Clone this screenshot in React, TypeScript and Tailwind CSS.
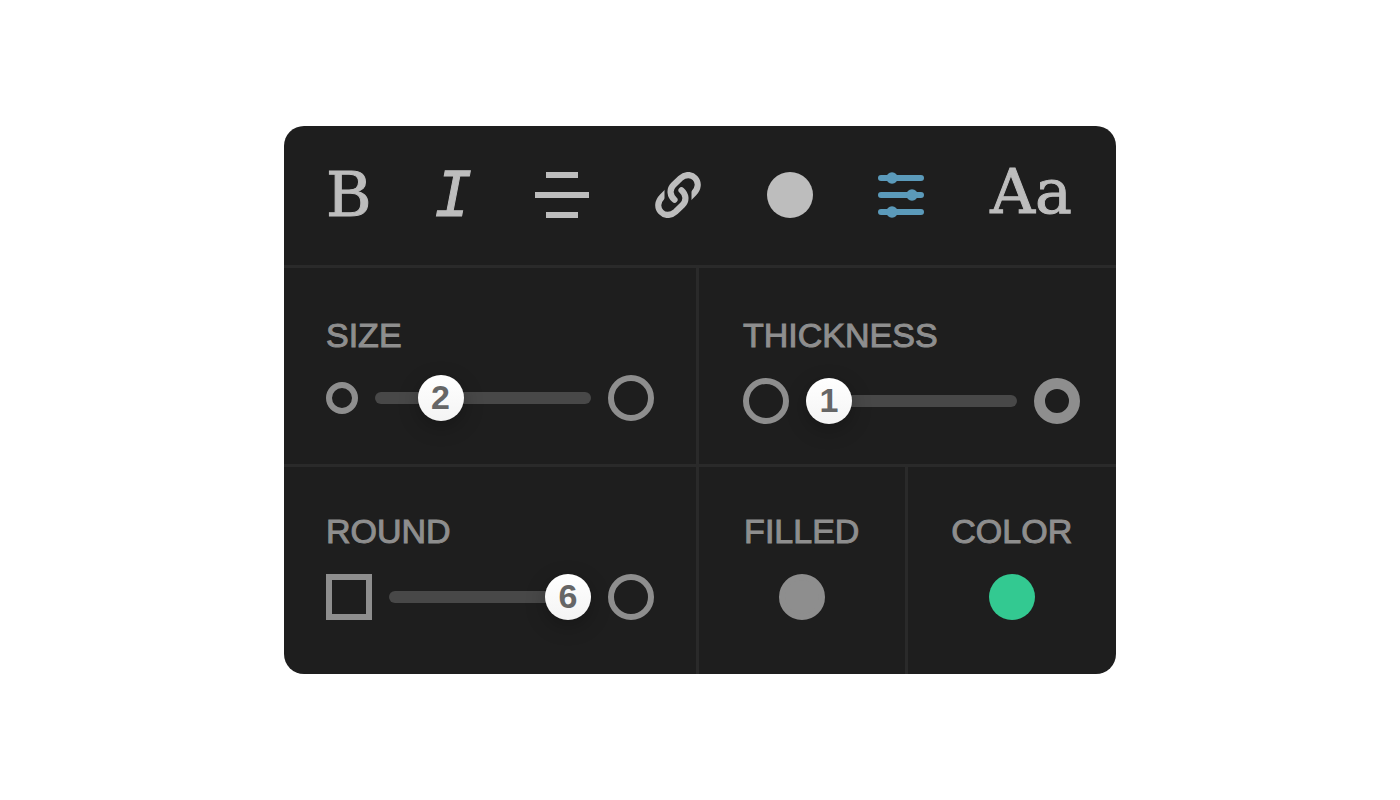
import React, { useState } from "react";

const THUMB = 46;

interface SliderProps {
  id: string;
  min: number;
  max: number;
  initial: number;
}

function Slider({ id, min, max, initial }: SliderProps) {
  const [value, setValue] = useState(initial);
  const ratio = (value - min) / (max - min);

  return (
    <div className="relative h-[46px] min-w-0 flex-1">
      <input
        id={id}
        type="range"
        min={min}
        max={max}
        value={value}
        onChange={(e) => setValue(Number(e.target.value))}
        className="block h-[46px] w-full cursor-pointer appearance-none bg-transparent focus:outline-none [&::-webkit-slider-runnable-track]:h-3 [&::-webkit-slider-runnable-track]:rounded-full [&::-webkit-slider-runnable-track]:bg-[#484848] [&::-webkit-slider-thumb]:-mt-[17px] [&::-webkit-slider-thumb]:size-[46px] [&::-webkit-slider-thumb]:appearance-none [&::-webkit-slider-thumb]:rounded-full [&::-webkit-slider-thumb]:bg-linear-to-b [&::-webkit-slider-thumb]:from-white [&::-webkit-slider-thumb]:to-[#f4f4f4] [&::-webkit-slider-thumb]:shadow-[0_6px_20px_rgba(0,0,0,0.25)]"
      />
      {/* Current value, sits on the thumb */}
      <output
        htmlFor={id}
        className="pointer-events-none absolute top-0 w-[46px] text-center text-[34px] leading-[44px] font-bold text-[#666]"
        style={{ left: `calc((100% - ${THUMB}px) * ${ratio})` }}
      >
        {value}
      </output>
    </div>
  );
}

const labelClass = "block text-[34px] leading-10 text-[#8e8e8e] [-webkit-text-stroke:1px_#8e8e8e]";
const glyphClass = "text-[62px] leading-[62px] text-[#bdbdbd] [-webkit-text-stroke:1px_#bdbdbd]";
const ringClass = "size-[46px] shrink-0 rounded-full border-[#8e8e8e]";

function AlignIcon() {
  return (
    <svg width="54" height="46" viewBox="0 0 54 46" fill="#bdbdbd" aria-hidden="true">
      <rect x="11" y="0" width="32" height="6" />
      <rect x="0" y="20" width="54" height="6" />
      <rect x="11" y="40" width="32" height="6" />
    </svg>
  );
}

function LinkIcon() {
  return (
    <svg width="46" height="46" viewBox="0 0 46 46" fill="none" stroke="#bdbdbd" strokeWidth="6.2" strokeLinecap="round" aria-hidden="true">
      <defs>
        <clipPath id="link-half">
          <path d="M0 -2 H48 V32 H36.5 V15 H28 V34 H0 Z" />
        </clipPath>
        <g id="link-loop" clipPath="url(#link-half)">
          <path d="M19.5 27.8 C15 23.8 14 17.5 18.5 13 L25.5 6.3 C30.5 1.8 36.5 2.2 40 6 C44.2 10.7 43.3 16.6 38.7 21.4 L34.5 25.6" />
        </g>
      </defs>
      <use href="#link-loop" />
      <use href="#link-loop" transform="rotate(180 23 23)" />
    </svg>
  );
}

function SlidersIcon() {
  return (
    <svg width="46" height="46" viewBox="0 0 46 46" fill="#5b9aba" aria-hidden="true">
      <rect x="0" y="3" width="46" height="6" rx="3" />
      <rect x="0" y="20" width="46" height="6" rx="3" />
      <rect x="0" y="37" width="46" height="6" rx="3" />
      <circle cx="14" cy="6" r="5.8" />
      <circle cx="34" cy="23" r="5.8" />
      <circle cx="14" cy="40" r="5.8" />
    </svg>
  );
}

export default function App() {
  const [filled, setFilled] = useState(true);

  return (
    <main className="flex min-h-screen items-center justify-center bg-white font-['Liberation_Sans',Arial,sans-serif]">
      <section className="w-full max-w-[832px] overflow-hidden rounded-[20px] bg-[#1e1e1e]">
        {/* Toolbar */}
        <div className="flex items-center justify-between border-b-3 border-[#2a2a2a] pt-[35px] pr-11 pb-9 pl-[42px]">
          <button aria-label="Bold" className={`font-['DejaVu_Serif',serif] ${glyphClass}`}>B</button>
          <button aria-label="Italic" className={`flex w-8 justify-center font-['DejaVu_Sans_Mono',monospace] italic ${glyphClass}`}>I</button>
          <button aria-label="Align center"><AlignIcon /></button>
          <button aria-label="Link"><LinkIcon /></button>
          <button aria-label="Shape" className="size-[46px] rounded-full bg-[#bdbdbd]" />
          <button aria-label="Adjust"><SlidersIcon /></button>
          <button aria-label="Font" className={`pb-1.5 font-['DejaVu_Serif',serif] ${glyphClass}`}>Aa</button>
        </div>

        <div className="grid grid-cols-[415fr_417fr] border-b-3 border-[#2a2a2a]">
          <div className="border-r-3 border-[#2a2a2a] px-[42px] pt-[47px] pb-[43px]">
            <label htmlFor="size" className={labelClass}>SIZE</label>
            <div className="mt-5 flex items-center gap-[17px]">
              <span className="size-8 shrink-0 rounded-full border-6 border-[#8e8e8e]" />
              <Slider id="size" min={0} max={8} initial={2} />
              <span className={`border-6 ${ringClass}`} />
            </div>
          </div>
          <div className="pt-[47px] pr-9 pl-11">
            <label htmlFor="thickness" className={labelClass}>THICKNESS</label>
            <div className="mt-[23px] flex items-center gap-[17px]">
              <span className={`border-6 ${ringClass}`} />
              <Slider id="thickness" min={1} max={6} initial={1} />
              <span className={`border-11 ${ringClass}`} />
            </div>
          </div>
        </div>

        <div className="grid grid-cols-[415fr_417fr]">
          <div className="border-r-3 border-[#2a2a2a] px-[42px] pt-11 pb-[54px]">
            <label htmlFor="round" className={labelClass}>ROUND</label>
            <div className="mt-[23px] flex items-center gap-[17px]">
              <span className="size-[46px] shrink-0 border-6 border-[#8e8e8e]" />
              <Slider id="round" min={0} max={6} initial={6} />
              <span className={`border-6 ${ringClass}`} />
            </div>
          </div>
          <div className="grid grid-cols-2">
            <div className="flex flex-col items-center border-r-3 border-[#2a2a2a] pt-11">
              <label htmlFor="filled" className={labelClass}>FILLED</label>
              <input
                id="filled"
                type="checkbox"
                checked={filled}
                onChange={(e) => setFilled(e.target.checked)}
                className="mt-[23px] size-[46px] cursor-pointer appearance-none rounded-full border-6 border-[#8e8e8e] checked:bg-[#8e8e8e]"
              />
            </div>
            <div className="flex flex-col items-center pt-11">
              <label htmlFor="color" className={labelClass}>COLOR</label>
              <button id="color" className="mt-[23px] size-[46px] rounded-full bg-[#33c991]" />
            </div>
          </div>
        </div>
      </section>
    </main>
  );
}
